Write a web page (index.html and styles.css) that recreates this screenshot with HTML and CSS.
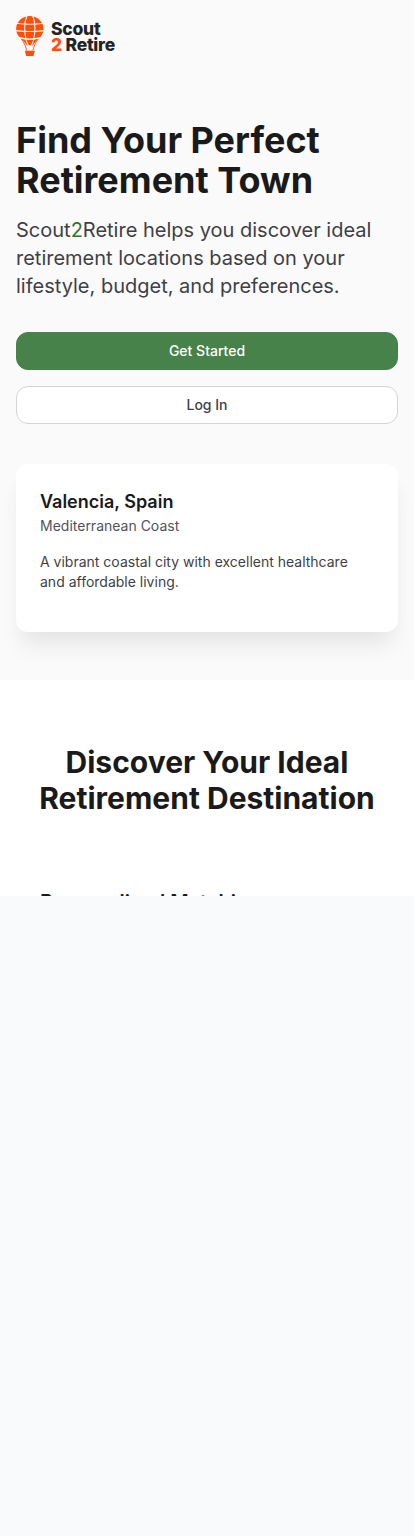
FILE: index.html
```html
<!DOCTYPE html>
<html lang="en">
<head>
<meta charset="utf-8">
<meta name="viewport" content="width=device-width, initial-scale=1">
<title>Scout2Retire</title>
<link rel="stylesheet" href="styles.css">
</head>
<body>
<div class="page">
  <section class="hero">
    <header class="brand">
      <svg class="balloon" viewBox="0 0 28 40" width="28" height="40" aria-hidden="true">
        <path class="fill" d="M13.8 0C21.3 0 27.5 5.6 27.5 13C27.5 16.9 25.7 19.6 23.3 22.2C18.5 23.4 9.1 23.4 4.3 22.2C1.9 19.6 .1 16.9 .1 13C.1 5.6 6.3 0 13.8 0Z"/>
        <path class="fill" d="M10.2 23.6Q13.8 24.1 17.4 23.6L14.9 29.2H12.7Z"/>
        <path class="cord" d="M5.2 22.8C7.6 26 9.6 29.5 10.7 34.5M22.4 22.8C20 26 18 29.5 16.9 34.5"/>
        <path class="fill" d="M5.6 22.8L9.4 23.6L11.8 30.6ZM22 22.8L18.2 23.6L15.8 30.6Z"/>
        <path class="line" d="M0 7.3Q13.8 9.2 28 7.3M0 14.6Q13.8 16.3 28 14.6M3 21.6Q13.8 24.4 25 21.6M10.8 0C8 7 8 15 10.2 24M16.8 0C19.6 7 19.6 15 17.4 24"/>
        <path class="fill" d="M8.8 34.7H18.8L17.5 40H10.1Z"/>
      </svg>
      <div class="wordmark">
        <span>Scout</span>
        <span><b>2</b> Retire</span>
      </div>
    </header>
    <h1 class="title">Find Your Perfect Retirement Town</h1>
    <p class="lead">Scout<span class="accent">2</span>Retire helps you discover ideal retirement locations based on your lifestyle, budget, and preferences.</p>
    <div class="actions">
      <a class="button primary">Get Started</a>
      <a class="button secondary">Log In</a>
    </div>
    <article class="card">
      <h2 class="town">Valencia, Spain</h2>
      <p class="region">Mediterranean Coast</p>
      <p class="about">A vibrant coastal city with excellent healthcare and affordable living.</p>
    </article>
  </section>
  <section class="features">
    <h2 class="heading">Discover Your Ideal Retirement Destination</h2>
    <h3 class="feature">Personalized Matching</h3>
  </section>
</div>
</body>
</html>
```
FILE: styles.css
```css
* { box-sizing: border-box; }
body, h1, h2, h3, p { margin: 0; }
body {
  min-height: 1536px;
  background: #f9fafb;
  color: #1a1a1b;
  font-family: Inter, "Liberation Sans", sans-serif;
}
.page { height: 896px; overflow: hidden; background: #fff; }
.hero { height: 680px; padding: 16px; background: #fafafa; }
.brand { display: flex; gap: 7px; height: 40px; }
.balloon { display: block; flex: none; }
.fill { fill: #ff4f0a; }
.cord { fill: none; stroke: #ff4f0a; stroke-width: 0.9; }
.line { fill: none; stroke: #fafafa; stroke-width: 1.1; }
.wordmark {
  display: flex;
  flex-direction: column;
  padding-top: 5px;
  color: #242424;
  font-family: Inter, sans-serif;
  font-size: 17.5px;
  font-weight: 800;
  line-height: 16px;
  letter-spacing: -0.25px;
  white-space: nowrap;
}
.wordmark b { color: #ff4f0a; font-weight: 800; }
.title { margin-top: 64px; font-size: 36px; line-height: 40px; font-weight: 700; }
.lead { margin-top: 16px; color: #3f3f46; font-size: 20px; line-height: 28px; }
.accent { color: #2f7433; }
.actions { display: flex; flex-direction: column; gap: 16px; margin-top: 32px; }
.button {
  display: flex;
  align-items: center;
  justify-content: center;
  height: 38px;
  border: 1px solid #47824a;
  border-radius: 12px;
  font-size: 14px;
  line-height: 20px;
  font-weight: 500;
}
.primary { background: #47824a; color: #fff; }
.secondary { background: #fff; border-color: #d4d4d8; color: #3f3f46; }
.card {
  height: 168px;
  margin-top: 40px;
  padding: 24px;
  border-radius: 12px;
  background: #fff;
  box-shadow: 0 20px 25px -5px rgba(0, 0, 0, .06), 0 10px 20px -5px rgba(0, 0, 0, .04);
}
.town { font-size: 18px; line-height: 28px; font-weight: 600; }
.region { color: #52525b; font-size: 14px; line-height: 20px; }
.about { margin-top: 16px; color: #3f3f46; font-size: 14px; line-height: 20px; }
.features { padding: 64px 16px; }
.heading { font-size: 30px; line-height: 36px; font-weight: 700; text-align: center; }
.feature { margin: 72px 24px 0; font-size: 20px; line-height: 28px; font-weight: 600; }
```
